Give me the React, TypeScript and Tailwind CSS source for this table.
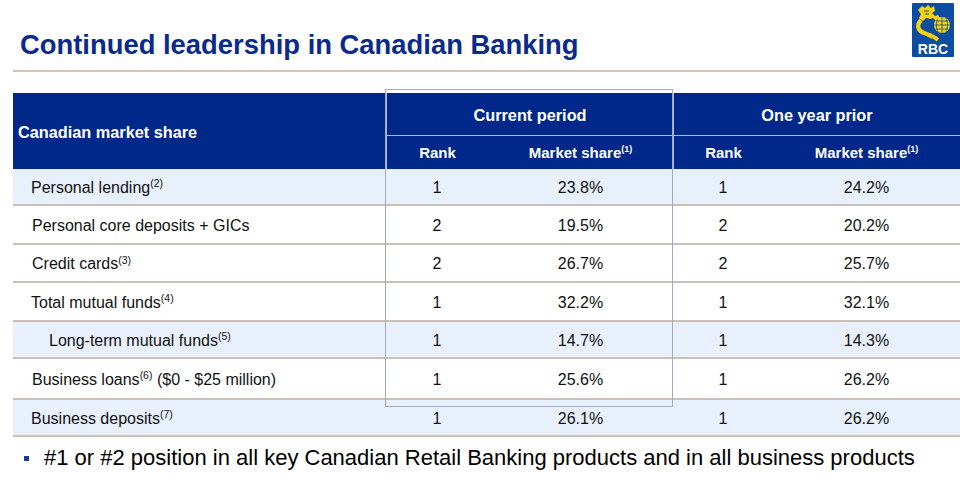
import React from "react";

type Row = {
  label: string;
  sup?: string;
  tail?: string;
  indent: string;
  h: string;
  shade: boolean;
  r1: string;
  s1: string;
  r2: string;
  s2: string;
};

const ROWS: Row[] = [
  { label: "Personal lending", sup: "(2)", indent: "pl-[18px]", h: "h-[37px]", shade: true, r1: "1", s1: "23.8%", r2: "1", s2: "24.2%" },
  { label: "Personal core deposits + GICs", indent: "pl-[19px]", h: "h-[39px]", shade: false, r1: "2", s1: "19.5%", r2: "2", s2: "20.2%" },
  { label: "Credit cards", sup: "(3)", indent: "pl-[19px]", h: "h-[38px]", shade: false, r1: "2", s1: "26.7%", r2: "2", s2: "25.7%" },
  { label: "Total mutual funds", sup: "(4)", indent: "pl-[18px]", h: "h-[39px]", shade: false, r1: "1", s1: "32.2%", r2: "1", s2: "32.1%" },
  { label: "Long-term mutual funds", sup: "(5)", indent: "pl-[36px]", h: "h-[37px]", shade: true, r1: "1", s1: "14.7%", r2: "1", s2: "14.3%" },
  { label: "Business loans", sup: "(6)", tail: " ($0 - $25 million)", indent: "pl-[19px]", h: "h-[41px]", shade: false, r1: "1", s1: "25.6%", r2: "1", s2: "26.2%" },
  { label: "Business deposits", sup: "(7)", indent: "pl-[18px]", h: "h-[37px]", shade: true, r1: "1", s1: "26.1%", r2: "1", s2: "26.2%" },
];

const COLS = "grid grid-cols-[373px_102px_185px_100px_187px]";

function RbcLogo() {
  return (
    <svg width="42" height="54" viewBox="0 0 42 54" className="mt-[3px] mr-[6px]">
      <rect x="0" y="0" width="42" height="54" rx="1" fill="#0c4da3" />
      {/* lion head + crown */}
      <path d="M6 7 L10 3 L13 5 L16 2 L19 5 L22 3 L23 8 L20 10 L23 13 L19 16 L14 15 L11 18 L7 15 L9 11 Z" fill="#f6d20c" />
      <path d="M12 8 h5 M13 11 h4" stroke="#0c4da3" strokeWidth="1" />
      {/* body */}
      <path d="M9 17 C4 22 6 28 12 30 C18 32 22 33 26 37" stroke="#f6d20c" strokeWidth="4" fill="none" />
      <path d="M5 24 C8 29 14 31 20 35" stroke="#f6d20c" strokeWidth="2" fill="none" />
      {/* globe */}
      <circle cx="30" cy="22" r="8" fill="#f6d20c" />
      <path d="M22 22 h16 M30 14 v16 M24 18 h12 M24 26 h12 M26 15 C24 19 24 25 26 29 M34 15 C36 19 36 25 34 29" stroke="#0c4da3" strokeWidth="0.8" fill="none" />
      <path d="M20 14 L26 12 L28 15 L23 17 Z" fill="#f6d20c" />
      <text x="21" y="51" textAnchor="middle" fill="#ffffff" fontFamily="'Liberation Sans', Arial, sans-serif" fontWeight="700" fontSize="14">
        RBC
      </text>
    </svg>
  );
}

export default function App() {
  return (
    <div className="relative h-[489px] w-[960px] overflow-hidden bg-white font-['Liberation_Sans',Arial,sans-serif] text-[#111111]">
      {/* title row */}
      <div className="flex h-[70px] justify-between">
        <h1 className="pl-[20px] pt-[31px] text-[27.4px] font-bold leading-none text-[#0a2a8c]">
          Continued leadership in Canadian Banking
        </h1>
        <RbcLogo />
      </div>
      <div className="ml-[13px] h-[2px] bg-[#cdc5bb]" />

      {/* table */}
      <div className="ml-[13px] mt-[21px]">
        <div className={`${COLS} grid-rows-[43px_33px] bg-[#00288a] font-bold text-white`}>
          <div className="row-span-2 flex items-center pl-[5px] pt-[3px] text-[16.3px]">Canadian market share</div>
          <div className="col-span-2 flex items-center justify-center border-b border-l border-[#aeb9d6] pt-[2px] text-[16.3px]">
            Current period
          </div>
          <div className="col-span-2 flex items-center justify-center border-b border-l border-[#aeb9d6] pt-[2px] text-[16.3px]">
            One year prior
          </div>
          <div className="flex items-center justify-center border-l border-[#aeb9d6] pt-[2px] text-[15px]">Rank</div>
          <div className="flex items-center justify-center pt-[2px] text-[15px]">
            Market share<sup className="text-[9px]">(1)</sup>
          </div>
          <div className="flex items-center justify-center border-l border-[#aeb9d6] pt-[2px] text-[15px]">Rank</div>
          <div className="flex items-center justify-center pt-[2px] text-[15px]">
            Market share<sup className="text-[9px]">(1)</sup>
          </div>
        </div>

        {ROWS.map((r) => (
          <div
            key={r.label}
            className={`${COLS} ${r.h} border-b-2 border-[#c9c1b7] pt-[2px] text-[16px] ${r.shade ? "bg-[#e8f0fc]" : "bg-white"}`}
          >
            <div className={`flex items-center ${r.indent}`}>
              <span>
                {r.label}
                {r.sup && <sup className="text-[10.5px]">{r.sup}</sup>}
                {r.tail}
              </span>
            </div>
            <div className="flex items-center justify-center">{r.r1}</div>
            <div className="flex items-center justify-center">{r.s1}</div>
            <div className="flex items-center justify-center">{r.r2}</div>
            <div className="flex items-center justify-center">{r.s2}</div>
          </div>
        ))}
      </div>

      {/* bullet */}
      <div className="mt-[10px] flex items-center pl-[24px]">
        <span className="mr-[15px] h-[5px] w-[5px] bg-[#1d3c9c]" />
        <span className="text-[22px] leading-none text-black">
          #1 or #2 position in all key Canadian Retail Banking products and in all business products
        </span>
      </div>

      {/* highlight frame around current period */}
      <div className="pointer-events-none absolute left-[385px] top-[89px] h-[318px] w-[288px] border border-[#9eabc2]" />
    </div>
  );
}
